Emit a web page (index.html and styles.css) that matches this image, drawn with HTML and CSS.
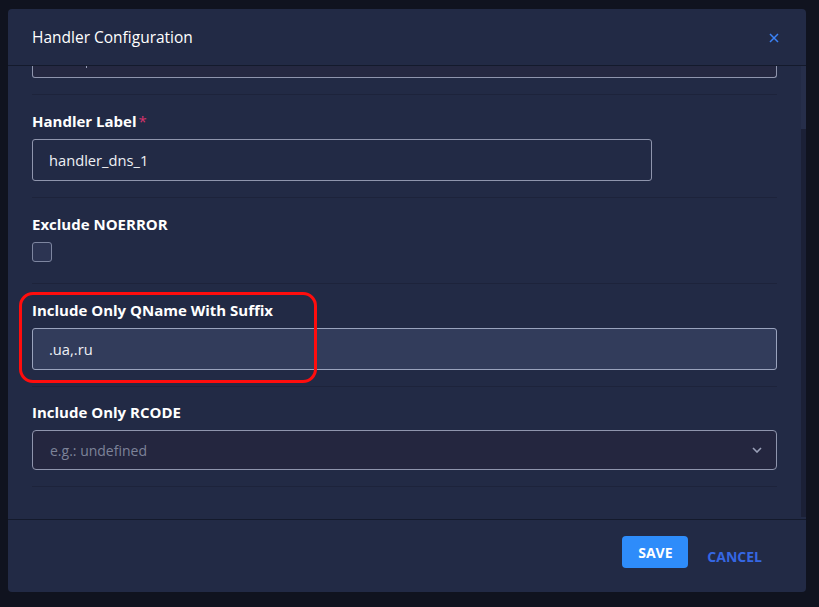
FILE: index.html
```html
<!DOCTYPE html>
<html>
<head>
<meta charset="utf-8">
<link rel="stylesheet" href="styles.css">
</head>
<body>
<div class="modal">
  <div class="modal-header">
    <span class="modal-title">Handler Configuration</span>
    <button class="close-btn" aria-label="close">
      <svg width="10" height="10" viewBox="0 0 10 10"><path d="M1 1 L9 9 M9 1 L1 9" stroke="#3b82f6" stroke-width="1.5" fill="none"/></svg>
    </button>
  </div>
  <div class="modal-body">
    <div class="content">
      <div class="field field-partial">
        <div class="partial-input"><span class="caret"></span></div>
      </div>
      <div class="field">
        <label class="label">Handler Label<span class="req">*</span></label>
        <div class="input input-half">handler_dns_1</div>
      </div>
      <div class="field">
        <label class="label">Exclude NOERROR</label>
        <div class="check-wrap"><span class="checkbox"></span></div>
      </div>
      <div class="field field-highlight">
        <label class="label">Include Only QName With Suffix</label>
        <div class="input input-active">.ua,.ru</div>
        <div class="highlight"></div>
      </div>
      <div class="field field-last">
        <label class="label">Include Only RCODE</label>
        <div class="select">
          <span class="placeholder">e.g.: undefined</span>
          <svg width="10" height="6" viewBox="0 0 10 6"><path d="M1 1 L5 5 L9 1" stroke="#9aa0b8" stroke-width="1.6" fill="none"/></svg>
        </div>
      </div>
    </div>
    <div class="scrollbar"><div class="thumb"></div></div>
  </div>
  <div class="modal-footer">
    <button class="btn-save">SAVE</button>
    <button class="btn-cancel">CANCEL</button>
  </div>
</div>
</body>
</html>
```

FILE: styles.css
```css
* { box-sizing: border-box; }
html, body {
  margin: 0;
  padding: 0;
  background: #10131f;
  font-family: "Open Sans", "Liberation Sans", sans-serif;
  color: #ffffff;
}
body { width: 819px; height: 607px; overflow: hidden; }

.modal {
  margin: 9px 0 0 8px;
  width: 798px;
  height: 583px;
  background: #222a45;
  border-radius: 4px;
  display: flex;
  flex-direction: column;
  overflow: hidden;
}

.modal-header {
  height: 57px;
  flex: none;
  display: flex;
  align-items: center;
  justify-content: space-between;
  padding: 0 27px 0 24px;
  border-bottom: 1px solid #141a2c;
}
.modal-title {
  font-size: 15.5px;
  font-weight: 400;
  color: #ffffff;
  margin-top: -1px;
}
.close-btn {
  background: none;
  border: none;
  padding: 0;
  width: 10px;
  height: 10px;
  display: flex;
  margin-top: 2px;
}

.modal-body {
  flex: 1;
  display: flex;
  min-height: 0;
  border-bottom: 1px solid #141a2c;
}
.content {
  flex: 1;
  padding: 0 24px 0 24px;
  overflow: hidden;
}
.scrollbar {
  width: 5px;
  flex: none;
  background: #1b2036;
  margin-bottom: 2px;
}
.thumb {
  height: 63px;
  background: #262e4a;
}

.field {
  padding: 16px 0 16px;
  border-bottom: 1px solid #1d233b;
}
.field-partial { padding-top: 0; }
.field-last { padding-top: 15px; }

.partial-input {
  height: 12px;
  border: 1px solid #8f95ad;
  border-top: none;
  border-radius: 0 0 3px 3px;
  background: #252841;
  position: relative;
}
.caret {
  position: absolute;
  left: 53px;
  top: 0;
  width: 1px;
  height: 2px;
  background: #9aa0b8;
}

.label {
  display: block;
  font-size: 15px;
  font-weight: 700;
  line-height: 20px;
  color: #ffffff;
  margin-bottom: 8px;
}
.req {
  color: #d6336c;
  font-weight: 400;
  margin-left: 2px;
}

.input {
  height: 42px;
  border: 1px solid #8f95ad;
  border-radius: 3px;
  display: flex;
  align-items: center;
  padding: 0 16px;
  font-size: 14.7px;
  color: #eef0f5;
}
.input-half { width: 620px; }
.input-active {
  background: #323c5b;
  border-color: #9aa3bd;
}

.check-wrap {
  height: 25px;
}
.checkbox {
  display: block;
  width: 20px;
  height: 20px;
  border: 1px solid #7e86a0;
  border-radius: 3px;
  background: #2c3452;
}

.field-highlight { position: relative; }
.highlight {
  position: absolute;
  left: -13px;
  top: 8px;
  width: 298px;
  height: 91px;
  border: 3px solid #ff0d0d;
  border-radius: 14px;
  pointer-events: none;
}

.select {
  height: 40px;
  border: 1px solid #8f95ad;
  border-radius: 4px;
  background: #24263f;
  display: flex;
  align-items: center;
  justify-content: space-between;
  padding: 0 14px 0 17px;
  font-size: 14px;
}
.placeholder { color: #7d8399; }

.modal-footer {
  height: 72px;
  flex: none;
  display: flex;
  justify-content: flex-end;
  align-items: flex-start;
  padding: 16px 44px 0 0;
}
.btn-save {
  height: 32px;
  width: 66px;
  background: #2e8cfa;
  border: none;
  border-radius: 4px;
  color: #ffffff;
  font-family: "Open Sans", "Liberation Sans", sans-serif;
  font-size: 14px;
  font-weight: 700;
  padding: 0;
}
.btn-cancel {
  background: none;
  border: none;
  padding: 0;
  margin: 8px 0 0 19px;
  height: 24px;
  color: #3567e3;
  font-family: "Open Sans", "Liberation Sans", sans-serif;
  font-size: 14px;
  font-weight: 700;
}
```
